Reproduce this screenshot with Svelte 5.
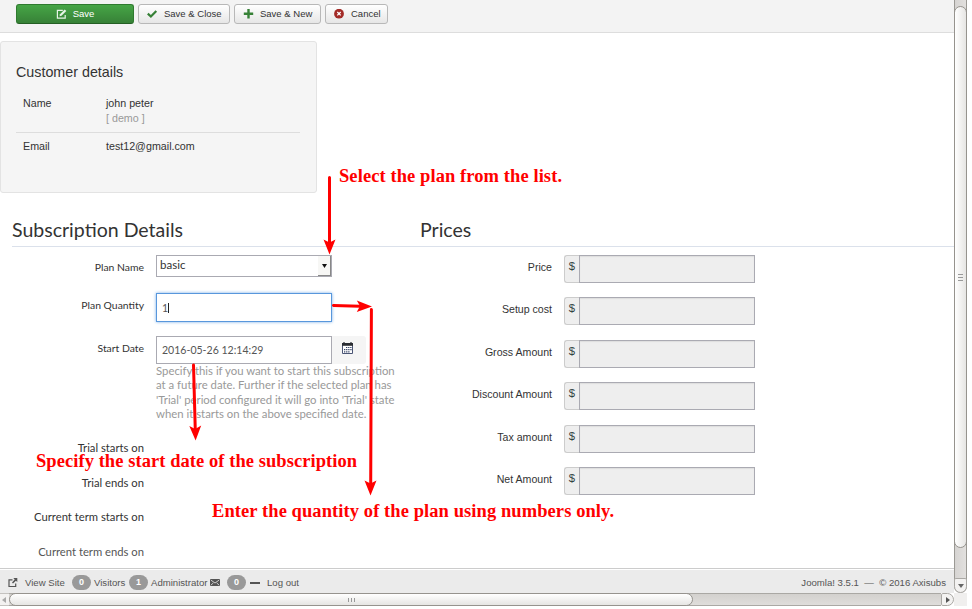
<script>
  const details = [
    { label: 'Name', value: 'john peter', note: '[ demo ]' },
    { label: 'Email', value: 'test12@gmail.com' }
  ];
  const help = [
    'Specify this if you want to start this subscription',
    'at a future date. Further if the selected plan has',
    "'Trial' period configured it will go into 'Trial' state",
    'when it starts on the above specified date.'
  ];
  const terms = ['Trial starts on', 'Trial ends on', 'Current term starts on', 'Current term ends on'];
  const prices = ['Price', 'Setup cost', 'Gross Amount', 'Discount Amount', 'Tax amount', 'Net Amount'];
</script>

<div class="screen">
  <div class="upper">
    <div class="page">
      <header class="toolbar">
        <button class="btn save">
          <svg width="11" height="11" viewBox="0 0 11 11"><path d="M6.8 1.300H1.400v7.800h7.800V6" fill="none" stroke="#e8f3e8" stroke-width="1.200"/><path d="M3.500 7.300l.5-2.100L8.700.5l1.600 1.600-4.800 4.700z" fill="#e8f3e8"/></svg>
          <span>Save</span>
        </button>
        <button class="btn close">
          <svg width="11" height="11" viewBox="0 0 11 11"><path d="M.8 4.600l3.100 2.900L9.300 2" fill="none" stroke="#378137" stroke-width="2.200"/></svg>
          <span>Save &amp; Close</span>
        </button>
        <button class="btn new">
          <svg width="11" height="11" viewBox="0 0 11 11"><path d="M5.500 0v9.400M.8 4.700h9.400" stroke="#378137" stroke-width="2.400"/></svg>
          <span>Save &amp; New</span>
        </button>
        <button class="btn cancel">
          <svg width="11" height="11" viewBox="0 0 11 11"><circle cx="5" cy="4.700" r="4.900" fill="#a32b27"/><path d="M3.300 3l3.400 3.400M6.700 3L3.300 6.400" stroke="#fff" stroke-width="1.300"/></svg>
          <span>Cancel</span>
        </button>
      </header>

      <section class="customer">
        <h3>Customer details</h3>
        {#each details as d}
          <div class="detail">
            <span class="key">{d.label}</span>
            <div class="val"><span>{d.value}</span>{#if d.note}<span class="note">{d.note}</span>{/if}</div>
          </div>
        {/each}
      </section>

      <div class="headings"><h2>Subscription Details</h2><h2>Prices</h2></div>

      <div class="cols">
        <div class="left">
          <div class="row plan">
            <span class="lab">Plan Name</span>
            <div class="select"><span>basic</span><i><svg width="5" height="4" viewBox="0 0 5 4"><path d="M0 0h5L2.500 4z" fill="#111"/></svg></i></div>
          </div>
          <div class="row qty"><span class="lab">Plan Quantity</span><div class="input focus"><span>1</span><b></b></div></div>
          <div class="row date">
            <span class="lab">Start Date</span>
            <div class="input">2016-05-26 12:14:29</div>
            <div class="cal"><svg width="11" height="12" viewBox="0 0 11 12"><path d="M.5 2h10v9.500H.5z" fill="#fff" stroke="#4a5575"/><path d="M0 1h11v2.800H0z" fill="#2a2d33"/><path d="M2 0v2M9 0v2" stroke="#2a2d33" stroke-width="1.200"/><path d="M4 5.500h6M2 7.700h8M2 9.900h6" stroke="#344264" stroke-width="1.200" stroke-dasharray="1.300 .8"/></svg></div>
          </div>
          <div class="help">{#each help as line}<p>{line}</p>{/each}</div>
          <div class="terms">{#each terms as t}<p>{t}</p>{/each}</div>
        </div>
        <div class="right">
          {#each prices as p}
            <div class="price"><span class="plab">{p}</span><span class="addon">$</span><div class="disabled"></div></div>
          {/each}
        </div>
      </div>

      <footer>
        <svg class="ext" width="10" height="10" viewBox="0 0 10 10"><path d="M4.500 1.800H1v6.700h6.700V5.500" fill="none" stroke="#555" stroke-width="1.200"/><path d="M5.300 0H9.300v4L7.900 2.700 5 5.500 4 4.500 6.700 1.500z" fill="#555"/></svg>
        <span class="view">View Site</span>
        <em>0</em><span class="vis">Visitors</span>
        <em>1</em><span class="adm">Administrator</span>
        <svg class="mail" width="10" height="7" viewBox="0 0 10 7"><rect width="10" height="7" rx="1" fill="#555"/><path d="M1 1.200l4 2.800 4-2.800M1 6l2.300-2M9 6L6.700 4" fill="none" stroke="#ebebeb" stroke-width=".8"/></svg>
        <em>0</em><i class="dash"></i><span class="out">Log out</span>
        <span class="copy">Joomla! 3.5.1 &nbsp;—&nbsp; © 2016 Axisubs</span>
      </footer>
    </div>
    <div class="vbar">
      <div class="vthumb"><i></i><i></i><i></i></div>
      <div class="vbtn"><svg width="6" height="4" viewBox="0 0 6 4"><path d="M0 0h6L3 4z" fill="#666"/></svg></div>
    </div>
  </div>
  <div class="hbar">
    <div class="hleft"><svg width="4" height="6" viewBox="0 0 4 6"><path d="M4 0v6L0 3z" fill="#aaa"/></svg></div>
    <div class="track"><div class="hthumb"><i></i><i></i><i></i></div></div>
    <div class="hbtn"><svg width="4" height="6" viewBox="0 0 4 6"><path d="M0 0v6L4 3z" fill="#555"/></svg></div>
    <div class="corner"></div>
  </div>

  <svg class="notes" width="972" height="609" viewBox="0 0 972 609">
    <g stroke="#f00" stroke-width="3" stroke-linecap="round">
      <path d="M329.500 177.500V243M333.500 305.500L360 306.300M371.400 309.500L370.700 484M193.500 365L195.300 431"/>
    </g>
    <g fill="#f00">
      <path d="M329.500 254.500L323.500 239.500L329.500 242.500L335.500 239.500z"/>
      <path d="M372 306.500L356.800 300.500L360 306L356.800 312z"/>
      <path d="M370.500 495.500L364.500 480.500L370.500 483.500L376.500 480.500z"/>
      <path d="M195.600 440.500L189.300 426L195.200 429L201.200 425.500z"/>
      <text x="339" y="182" textLength="223">Select the plan from the list.</text>
      <text x="36" y="467" textLength="321">Specify the start date of the subscription</text>
      <text x="212" y="517" textLength="402">Enter the quantity of the plan using numbers only.</text>
    </g>
  </svg>
</div>

<style>
  .screen { position: relative; width: 972px; height: 609px; background: #fff; overflow: hidden; font-family: "Liberation Sans", Arial, sans-serif; color: #333; }
  .screen * { box-sizing: border-box; }
  h2, h3, p { margin: 0; font-weight: 400; }
  svg { display: block; flex: none; }
  span, p, h2, h3 { white-space: nowrap; }
  .upper { display: flex; height: 593px; }
  .page { width: 954px; display: flex; flex-direction: column; }

  .toolbar { height: 33px; flex: none; background: #f3f3f3; border-bottom: 1px solid #ddd; padding: 4px 0 0 16px; display: flex; gap: 4px; }
  .btn { height: 20px; border: 1px solid #b8b8b8; border-radius: 3px; padding: 0 8px; display: flex; align-items: center; gap: 6px; background: linear-gradient(#fff, #e6e6e6); font-family: inherit; font-size: 9.5px; line-height: 18px; color: #333; }
  .save { width: 118px; justify-content: center; background: linear-gradient(#46a546, #378137); border-color: #2f7a2f #2f7a2f #245f24; color: #fff; }
  .close { width: 92px; }
  .new { width: 87px; }
  .cancel { width: 63px; }

  .customer { flex: none; width: 317px; height: 152px; margin-top: 8px; background: #f5f5f5; border: 1px solid #e3e3e3; border-radius: 3px; padding: 21px 16px 0 15px; }
  h3 { font-size: 14.3px; line-height: 19px; height: 26px; }
  .detail { display: flex; font-size: 10.7px; line-height: 15px; padding: 7px 0 0 7px; height: 43px; }
  .detail + .detail { border-top: 1px solid #ddd; padding-top: 6px; }
  .key { width: 83px; }
  .val { display: flex; flex-direction: column; }
  .note { color: #999; }

  .headings { flex: none; height: 54px; margin-left: 12px; border-bottom: 1px solid #dbe1eb; padding-top: 24px; display: flex; font-family: Lato, Carlito, sans-serif; }
  h2 { width: 408px; font-size: 19.55px; line-height: 26px; }
  .cols { display: flex; height: 321px; flex: none; padding-top: 8px; overflow: hidden; }
  .left { width: 420px; font-family: Lato, Carlito, sans-serif; }
  .row { display: flex; }
  .lab { width: 144px; margin-right: 12px; text-align: right; font-size: 10.4px; line-height: 15px; padding-top: 5px; }
  .plan { height: 38px; }
  .qty { height: 43px; }
  .date { height: 28px; }
  .select { width: 176px; height: 22px; border: 1px solid #aaaab2; display: flex; justify-content: space-between; padding-left: 3px; font-size: 11.5px; line-height: 18px; }
  .select i { width: 13px; height: 20px; background: #f7f7f5; border-right: 1px solid #888; border-bottom: 1px solid #888; display: flex; align-items: center; justify-content: center; }
  .input { width: 176px; height: 28px; border: 1px solid #aaaab2; padding-left: 5px; font-size: 10.55px; line-height: 26px; color: #555; display: flex; align-items: center; }
  .focus { height: 29px; border-color: #5897dc; box-shadow: 0 0 3px #79aee8; }
  .focus b { width: 1px; height: 10px; background: #222; }
  .cal { width: 34px; height: 28px; background: #f5f5f5; border-radius: 0 3px 3px 0; padding: 6px 0 0 10px; }
  .help { padding-left: 156px; height: 76px; color: #999; font-size: 11.35px; line-height: 14.3px; }
  .terms { width: 144px; text-align: right; font-size: 11.25px; line-height: 16px; }
  .terms p { height: 34.7px; }
  .terms p:last-child { color: #555; }

  .price { display: flex; height: 42.4px; font-size: 10.6px; }
  .plab { width: 132px; margin-right: 12px; text-align: right; line-height: 15px; padding-top: 5px; }
  .addon { width: 15px; height: 28px; background: #eee; border: 1px solid #ccc; border-right: 0; border-radius: 3px 0 0 3px; text-align: center; font-size: 11.3px; line-height: 21px; color: #344; }
  .disabled { width: 176px; height: 28px; background: #eee; border: 1px solid #aaaab2; box-shadow: inset 0 1px 1px #ddd; }

  footer { flex: none; height: 25px; border-top: 1px solid #ccc; background: #ebebeb; box-shadow: inset 0 1px #fff; display: flex; align-items: center; padding: 3px 8px 0; font-size: 9.6px; color: #555; }
  .view { margin-left: 7px; width: 47px; }
  em { width: 19px; height: 15px; border-radius: 8px; background: #999; color: #fff; font-style: normal; font-weight: 700; font-size: 9px; line-height: 15px; text-align: center; flex: none; }
  .vis { margin-left: 3px; width: 35px; }
  .adm { margin-left: 3px; width: 59px; }
  .mail { margin-right: 7px; }
  .dash { width: 10px; height: 2px; background: #555; margin: 0 7px 0 4px; flex: none; }
  .copy { margin-left: auto; }

  .vbar { width: 13px; background: linear-gradient(90deg, #d6d4d2, #e2e0de); border: solid #9b9994; border-width: 0 1px; border-radius: 0 0 7px 7px; padding-top: 6px; display: flex; flex-direction: column; }
  .vthumb { height: 542px; margin: 0 -1px; border: 1px solid #96938e; border-radius: 7px; background: linear-gradient(90deg, #fff, #e6e5e3); display: flex; flex-direction: column; align-items: center; justify-content: center; gap: 2px; }
  .vthumb i { width: 5px; height: 1px; background: #999; }
  .vbtn { height: 15px; margin: 30px -1px 0; border: 1px solid #aaa8a4; border-radius: 2px 2px 7px 7px; background: #f3f2f1; display: flex; align-items: center; justify-content: center; }
  .hbar { display: flex; height: 13px; width: 967px; }
  .hleft { width: 9px; background: #f3f2f1; border: solid #c4c2bf; border-width: 1px 0; display: flex; align-items: center; padding-left: 2px; }
  .track { width: 932px; background: linear-gradient(#d3d1ce, #dfdddb); border: solid #aaa8a4; border-width: 1px 0; }
  .hthumb { width: 684px; height: 13px; margin-top: -1px; border: 1px solid #96938e; border-radius: 7px; background: linear-gradient(#fff, #e6e5e3); display: flex; align-items: center; justify-content: center; gap: 2px; }
  .hthumb i { width: 1px; height: 4px; background: #999; }
  .hbtn { width: 13px; border: 1px solid #aaa8a4; border-radius: 2px 7px 7px 2px; background: #f3f2f1; display: flex; align-items: center; justify-content: center; }
  .corner { width: 13px; background: #f0efee; }
  .notes { position: absolute; left: 0; top: 0; pointer-events: none; }
  .notes text { font: 700 18.5px "Liberation Serif", "Times New Roman", serif; }
</style>
